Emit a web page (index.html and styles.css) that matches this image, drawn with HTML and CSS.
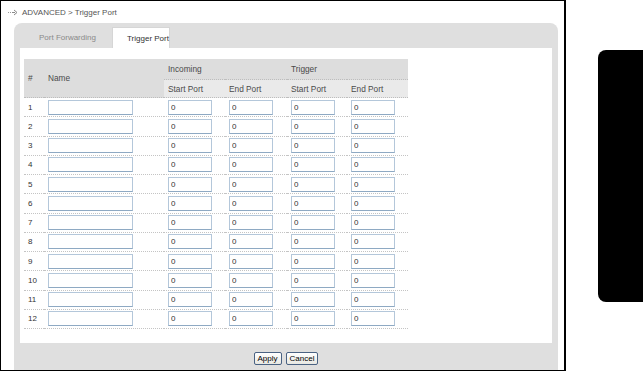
FILE: index.html
```html
<!DOCTYPE html>
<html lang="en">
<head>
    <meta charset="UTF-8">
    <title>Trigger Port</title>
    <link rel="stylesheet" href="styles.css">
</head>
<body>
    <div class="page">
        <div class="crumb">
            <svg class="crumb-icon" width="11" height="7" viewBox="0 0 11 7">
                <rect x="0" y="3" width="1" height="1" fill="#9a9a9a"/>
                <rect x="2" y="3" width="1" height="1" fill="#9a9a9a"/>
                <path d="M4 3.5h3M6 1l3 2.5L6 6" fill="none" stroke="#8a8a8a" stroke-width="1"/>
            </svg>
            <span>ADVANCED &gt; Trigger Port</span>
        </div>

        <div class="panel">
            <div class="tabs">
                <div class="tab">Port Forwarding</div>
                <div class="tab active">Trigger Port</div>
            </div>

            <div class="content">
                <table class="rules">
                    <colgroup>
                        <col style="width:20px">
                        <col style="width:120px">
                        <col style="width:61px">
                        <col style="width:62px">
                        <col style="width:60px">
                        <col style="width:61px">
                    </colgroup>
                    <thead>
                        <tr class="head-top">
                            <th rowspan="2">#</th>
                            <th rowspan="2">Name</th>
                            <th colspan="2">Incoming</th>
                            <th colspan="2">Trigger</th>
                        </tr>
                        <tr class="head-sub">
                            <th>Start Port</th>
                            <th>End Port</th>
                            <th>Start Port</th>
                            <th>End Port</th>
                        </tr>
                    </thead>
                    <tbody id="rows"></tbody>
                </table>
            </div>

            <div class="actions">
                <button type="button" class="btn">Apply</button>
                <button type="button" class="btn">Cancel</button>
            </div>
        </div>
    </div>

    <div class="side-tab"></div>

    <script>
        const rows = document.getElementById('rows');
        for (let i = 1; i <= 12; i++) {
            const tr = document.createElement('tr');
            tr.innerHTML =
                '<td>' + i + '</td>' +
                '<td><input type="text" class="name-field"></td>' +
                '<td><input type="text" class="port-field" value="0"></td>' +
                '<td><input type="text" class="port-field" value="0"></td>' +
                '<td><input type="text" class="port-field" value="0"></td>' +
                '<td><input type="text" class="port-field" value="0"></td>';
            rows.appendChild(tr);
        }
    </script>
</body>
</html>
```

FILE: styles.css
```css
body {
    margin: 0;
    display: flex;
    align-items: flex-start;
    overflow: hidden;
    font-family: "Liberation Sans", Arial, sans-serif;
    font-size: 8px;
    color: #333;
    background: #fff;
}

.page {
    width: 566px;
    height: 371px;
    box-sizing: border-box;
    border: 1px solid #000;
    border-right-width: 2px;
    padding-right: 6px;
    display: flex;
    flex-direction: column;
}

.crumb {
    height: 22px;
    display: flex;
    align-items: center;
    padding-left: 7px;
    color: #555;
}

.crumb-icon {
    margin-right: 3px;
}

.panel {
    flex: 1;
    display: flex;
    flex-direction: column;
    margin-left: 13px;
    background: #dfdfdf;
    border-radius: 8px 8px 0 0;
    padding: 0 6px;
}

.tabs {
    height: 25px;
    display: flex;
    align-items: flex-end;
}

.tab {
    height: 21px;
    line-height: 21px;
    width: 92px;
    box-sizing: border-box;
    padding-left: 19px;
    color: #8a8a8a;
}

.tab.active {
    width: 58px;
    padding-left: 14px;
    background: #fff;
    color: #333;
    border: 1px solid #d6d6d6;
    border-bottom: none;
}

.content {
    height: 295px;
    box-sizing: border-box;
    background: #fff;
    padding: 11px 0 0 4px;
}

.rules {
    width: 384px;
    table-layout: fixed;
    border-collapse: collapse;
}

.rules th {
    font-weight: normal;
    font-size: 8.3px;
    text-align: left;
    padding: 0 4px;
    color: #4a4a4a;
    background: #dddddd;
}

.head-top th {
    height: 20px;
}

.head-top th[colspan] {
    border-bottom: 1px dotted #bdbdbd;
}

.head-sub th {
    height: 17px;
    background: #eaeaea;
    border-bottom: 1px dotted #bdbdbd;
}

.rules thead th[rowspan] {
    border-bottom: 1px dotted #bdbdbd;
}

.rules td {
    height: 18.25px;
    padding: 0 4px;
    border-bottom: 1px dotted #c4c4c4;
    color: #333;
}

.rules input {
    display: block;
    height: 15px;
    box-sizing: border-box;
    margin: 0;
    padding: 0 2px;
    font-family: "Liberation Sans", Arial, sans-serif;
    font-size: 8px;
    color: #333;
    background: #fff;
    border: 1px solid #b4c7da;
    border-bottom-color: #8ea9c3;
}

.name-field {
    width: 85px;
}

.port-field {
    width: 44px;
}

.actions {
    height: 26px;
    display: flex;
    justify-content: center;
    align-items: flex-start;
    gap: 4px;
    padding-top: 9px;
    box-sizing: border-box;
}

.btn {
    height: 13px;
    padding: 0 3px;
    font-family: "Liberation Sans", Arial, sans-serif;
    font-size: 8px;
    line-height: 11px;
    color: #000;
    background: linear-gradient(#ffffff, #e8e8e2);
    border: 1px solid #4a6283;
    border-radius: 2px;
}

.side-tab {
    width: 45px;
    height: 252px;
    margin: 50px 0 0 32px;
    background: #000;
    border-radius: 8px 0 0 8px;
}
```
